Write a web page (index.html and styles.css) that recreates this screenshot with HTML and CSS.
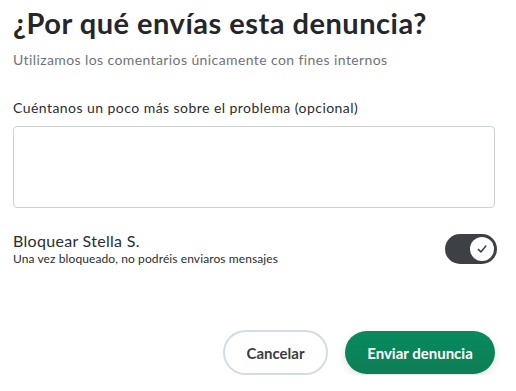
FILE: index.html
```html
<!DOCTYPE html>
<html lang="es">
<head>
<meta charset="utf-8">
<link rel="stylesheet" href="styles.css">
</head>
<body>
<div class="dialog">
  <h1 class="title">¿Por qué envías esta denuncia?</h1>
  <p class="subtitle">Utilizamos los comentarios únicamente con fines internos</p>
  <label class="label" for="fb">Cuéntanos un poco más sobre el problema (opcional)</label>
  <textarea id="fb" class="textarea"></textarea>
  <div class="block-row">
    <div class="block-text">
      <div class="block-title">Bloquear Stella S.</div>
      <div class="block-desc">Una vez bloqueado, no podréis enviaros mensajes</div>
    </div>
    <div class="toggle">
      <span class="knob">
        <svg width="12" height="12" viewBox="0 0 12 12"><path d="M2.3 6.4 L4.9 8.9 L9.8 3" fill="none" stroke="#3d4044" stroke-width="1.5" stroke-linecap="round" stroke-linejoin="round"/></svg>
      </span>
    </div>
  </div>
  <div class="actions">
    <button class="btn btn-cancel">Cancelar</button>
    <button class="btn btn-send">Enviar denuncia</button>
  </div>
</div>
</body>
</html>
```

FILE: styles.css
```css
html, body {
  margin: 0;
  padding: 0;
  background: #ffffff;
}
body {
  font-family: Lato, "Noto Sans", sans-serif;
  color: #2b2d30;
}
.dialog {
  padding: 5px 21px 0 13px;
  display: flex;
  flex-direction: column;
}
.title {
  margin: 0;
  font-size: 29px;
  letter-spacing: 0.5px;
  font-weight: 700;
  line-height: 36px;
  color: #24262a;
}
.subtitle {
  margin: 10px 0 0;
  font-size: 14px;
  letter-spacing: 0.4px;
  line-height: 18px;
  color: #707377;
}
.label {
  margin-top: 30px;
  font-size: 14px;
  letter-spacing: 0.45px;
  line-height: 18px;
  color: #2b2d30;
}
.textarea {
  margin-top: 9px;
  box-sizing: border-box;
  width: 482px;
  height: 82px;
  border: 1px solid #cdd1d6;
  border-radius: 4px;
  resize: none;
  font: inherit;
}
.block-row {
  margin-top: 23px;
  display: flex;
  align-items: center;
  justify-content: space-between;
  width: 484px;
}
.block-title {
  font-size: 16px;
  letter-spacing: 0.3px;
  line-height: 20px;
  color: #2b2d30;
}
.block-desc {
  font-size: 12px;
  letter-spacing: 0.1px;
  line-height: 15px;
  color: #2b2d30;
  margin-top: 0;
}
.toggle {
  width: 52px;
  height: 30px;
  border-radius: 15px;
  background: #3d4044;
  display: flex;
  align-items: center;
  justify-content: flex-end;
  padding-right: 3px;
  box-sizing: border-box;
}
.knob {
  width: 24px;
  height: 24px;
  border-radius: 50%;
  background: #ffffff;
  display: flex;
  align-items: center;
  justify-content: center;
}
.actions {
  margin-top: 64px;
  display: flex;
  justify-content: flex-end;
  align-items: center;
  gap: 17px;
  width: 482px;
}
.btn {
  font-family: Lato, "Noto Sans", sans-serif;
  font-size: 15px;
  font-weight: 700;
  border-radius: 23px;
  cursor: pointer;
}
.btn-cancel {
  width: 105px;
  height: 45px;
  background: #ffffff;
  border: 2px solid #d3dce5;
  color: #3b3d41;
}
.btn-send {
  width: 150px;
  height: 43px;
  border: none;
  color: #ffffff;
  background: linear-gradient(180deg, #078a5e 0%, #0f7e55 100%);
  box-shadow: 0 3px 8px rgba(0, 0, 0, 0.12);
}
```
